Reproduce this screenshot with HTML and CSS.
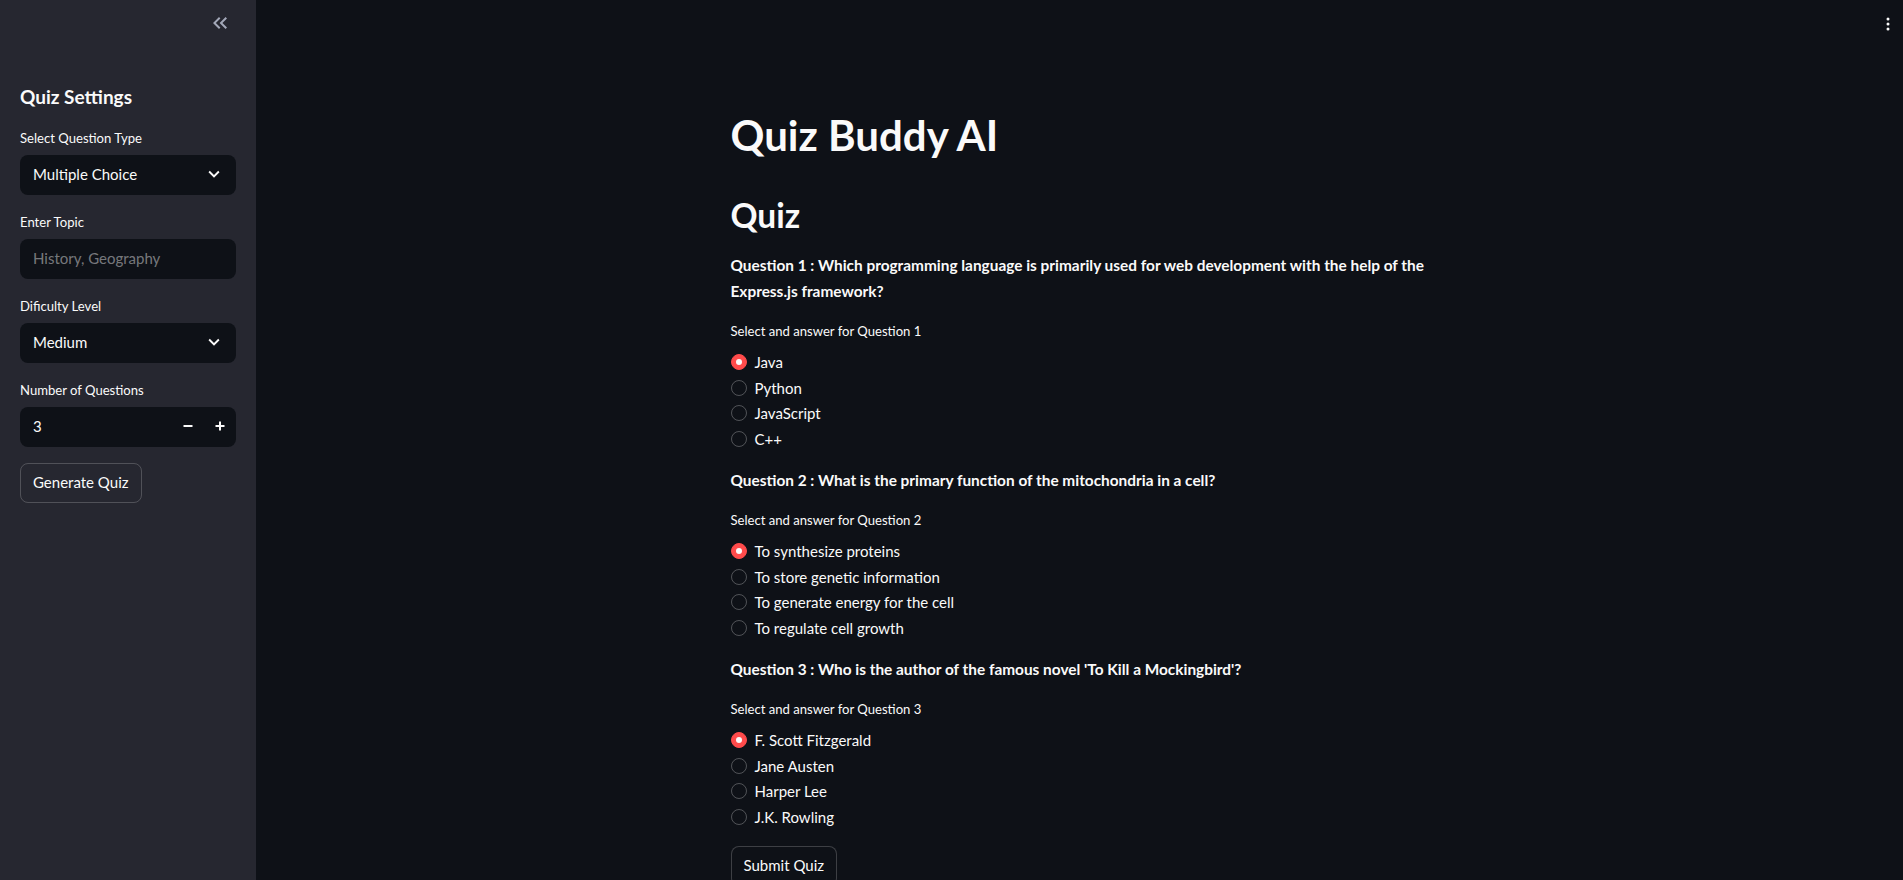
FILE: index.html
```html
<!DOCTYPE html>
<html lang="en">
<head>
<meta charset="utf-8">
<title>Quiz Buddy AI</title>
<link rel="stylesheet" href="styles.css">
</head>
<body>
<div class="app">
  <aside class="sidebar">
    <div class="sidebar-top">
      <button class="collapse-btn" aria-label="Collapse sidebar">
        <svg viewBox="0 0 24 24" width="24" height="24"><path d="M17.59 18L19 16.59 14.42 12 19 7.41 17.59 6l-6 6z M11 18l1.41-1.41L7.83 12l4.58-4.59L11 6l-6 6z" fill="currentColor"/></svg>
      </button>
    </div>
    <div class="sidebar-content">
      <h3 class="sidebar-title">Quiz Settings</h3>
      <div class="field">
        <label class="field-label">Select Question Type</label>
        <div class="control select">
          <span>Multiple Choice</span>
          <svg class="chev" viewBox="0 0 24 24" width="22" height="22"><path d="M16.59 8.59L12 13.17 7.41 8.59 6 10l6 6 6-6z" fill="currentColor"/></svg>
        </div>
      </div>
      <div class="field">
        <label class="field-label">Enter Topic</label>
        <div class="control input"><span class="placeholder">History, Geography</span></div>
      </div>
      <div class="field">
        <label class="field-label">Dificulty Level</label>
        <div class="control select">
          <span>Medium</span>
          <svg class="chev" viewBox="0 0 24 24" width="22" height="22"><path d="M16.59 8.59L12 13.17 7.41 8.59 6 10l6 6 6-6z" fill="currentColor"/></svg>
        </div>
      </div>
      <div class="field">
        <label class="field-label">Number of Questions</label>
        <div class="control number">
          <span class="num-value">3</span>
          <span class="step"><svg viewBox="0 0 12 12" width="12" height="12"><path d="M1.5 6h9" stroke="currentColor" stroke-width="2"/></svg></span>
          <span class="step"><svg viewBox="0 0 12 12" width="12" height="12"><path d="M1.5 6h9M6 1.5v9" stroke="currentColor" stroke-width="2"/></svg></span>
        </div>
      </div>
      <div class="field">
        <button class="btn">Generate Quiz</button>
      </div>
    </div>
  </aside>
  <main class="main">
    <div class="toolbar">
      <svg viewBox="0 0 4 14" width="4" height="14"><circle cx="2" cy="2" r="1.5" fill="#fafafa"/><circle cx="2" cy="7" r="1.5" fill="#fafafa"/><circle cx="2" cy="12" r="1.5" fill="#fafafa"/></svg>
    </div>
    <div class="block">
      <h1 class="title">Quiz Buddy AI</h1>
      <h2 class="subtitle">Quiz</h2>

      <p class="question">Question 1 : Which programming language is primarily used for web development with the help of the Express.js framework?</p>
      <div class="radio-group">
        <div class="radio-label">Select and answer for Question 1</div>
        <div class="option selected"><span class="dot"></span>Java</div>
        <div class="option"><span class="dot"></span>Python</div>
        <div class="option"><span class="dot"></span>JavaScript</div>
        <div class="option"><span class="dot"></span>C++</div>
      </div>

      <p class="question">Question 2 : What is the primary function of the mitochondria in a cell?</p>
      <div class="radio-group">
        <div class="radio-label">Select and answer for Question 2</div>
        <div class="option selected"><span class="dot"></span>To synthesize proteins</div>
        <div class="option"><span class="dot"></span>To store genetic information</div>
        <div class="option"><span class="dot"></span>To generate energy for the cell</div>
        <div class="option"><span class="dot"></span>To regulate cell growth</div>
      </div>

      <p class="question">Question 3 : Who is the author of the famous novel 'To Kill a Mockingbird'?</p>
      <div class="radio-group">
        <div class="radio-label">Select and answer for Question 3</div>
        <div class="option selected"><span class="dot"></span>F. Scott Fitzgerald</div>
        <div class="option"><span class="dot"></span>Jane Austen</div>
        <div class="option"><span class="dot"></span>Harper Lee</div>
        <div class="option"><span class="dot"></span>J.K. Rowling</div>
      </div>

      <div class="submit-row"><button class="btn btn-main">Submit Quiz</button></div>
    </div>
  </main>
</div>
</body>
</html>
```

FILE: styles.css
```css
* { box-sizing: border-box; }
html, body {
  margin: 0;
  height: 100%;
  overflow: hidden;
}
body {
  background: #0e1117;
  color: #fafafa;
  font-family: "Lato", "Noto Sans", sans-serif;
  font-size: 15px;
}
.app {
  display: flex;
  height: 880px;
}
.sidebar {
  width: 256px;
  flex: 0 0 256px;
  background: #262730;
  display: flex;
  flex-direction: column;
}
.sidebar-top {
  height: 46px;
  display: flex;
  justify-content: flex-end;
  align-items: center;
  padding-right: 24px;
}
.collapse-btn {
  background: none;
  border: 0;
  padding: 0;
  color: #a3a8b8;
  width: 24px;
  height: 24px;
  display: flex;
}
.sidebar-content {
  padding: 38px 20px 0;
  display: flex;
  flex-direction: column;
  gap: 16px;
}
.sidebar-title {
  margin: 0 0 2px;
  font-size: 19px;
  font-weight: 700;
  line-height: 25px;
}
.field {
  display: flex;
  flex-direction: column;
}
.field-label {
  font-size: 13.1px;
  line-height: 22px;
  margin-bottom: 6px;
}
.control {
  height: 40px;
  background: #0e1117;
  border-radius: 8px;
  display: flex;
  align-items: center;
  padding-left: 13px;
  padding-bottom: 2px;
  font-size: 15px;
}
.select {
  justify-content: space-between;
  padding-right: 11px;
}
.chev { color: #fafafa; }
.placeholder { color: rgba(250, 250, 250, 0.45); }
.number { padding-right: 0; }
.num-value { flex: 1; }
.step {
  width: 32px;
  height: 38px;
  display: flex;
  align-items: center;
  justify-content: center;
  color: #fafafa;
}
.btn {
  align-self: flex-start;
  font-family: inherit;
  font-size: 15px;
  color: #fafafa;
  background: transparent;
  border: 1px solid rgba(250, 250, 250, 0.2);
  border-radius: 8px;
  height: 40px;
  padding: 0 12px 2px;
}
.main {
  flex: 1;
  position: relative;
}
.toolbar {
  position: absolute;
  top: 17px;
  right: 13px;
  display: flex;
}
.block {
  max-width: 736px;
  margin: 0 auto;
  padding: 109px 16px 0 19px;
  display: flex;
  flex-direction: column;
  gap: 16px;
}
.title {
  margin: 0 0 16px;
  font-size: 42px;
  font-weight: 700;
  line-height: 53px;
}
.subtitle {
  margin: 0;
  font-size: 33.5px;
  font-weight: 700;
  line-height: 43px;
}
.question {
  margin: 0;
  font-weight: 700;
  font-size: 15.4px;
  line-height: 25.6px;
}
.radio-group {
  display: flex;
  flex-direction: column;
}
.radio-label {
  font-size: 13.1px;
  line-height: 22.4px;
  margin-bottom: 6.6px;
}
.option {
  display: flex;
  align-items: center;
  height: 25.6px;
  font-size: 15px;
  gap: 8px;
}
.dot {
  width: 16px;
  height: 16px;
  border-radius: 50%;
  border: 1px solid rgba(250, 250, 250, 0.28);
  display: flex;
  align-items: center;
  justify-content: center;
}
.selected .dot {
  background: #ff4b4b;
  border-color: #ff4b4b;
}
.selected .dot::after {
  content: "";
  width: 6px;
  height: 6px;
  border-radius: 50%;
  background: #fafafa;
}
.submit-row { display: flex; padding-top: 0; }
.btn-main { background: #0e1117; }
```
